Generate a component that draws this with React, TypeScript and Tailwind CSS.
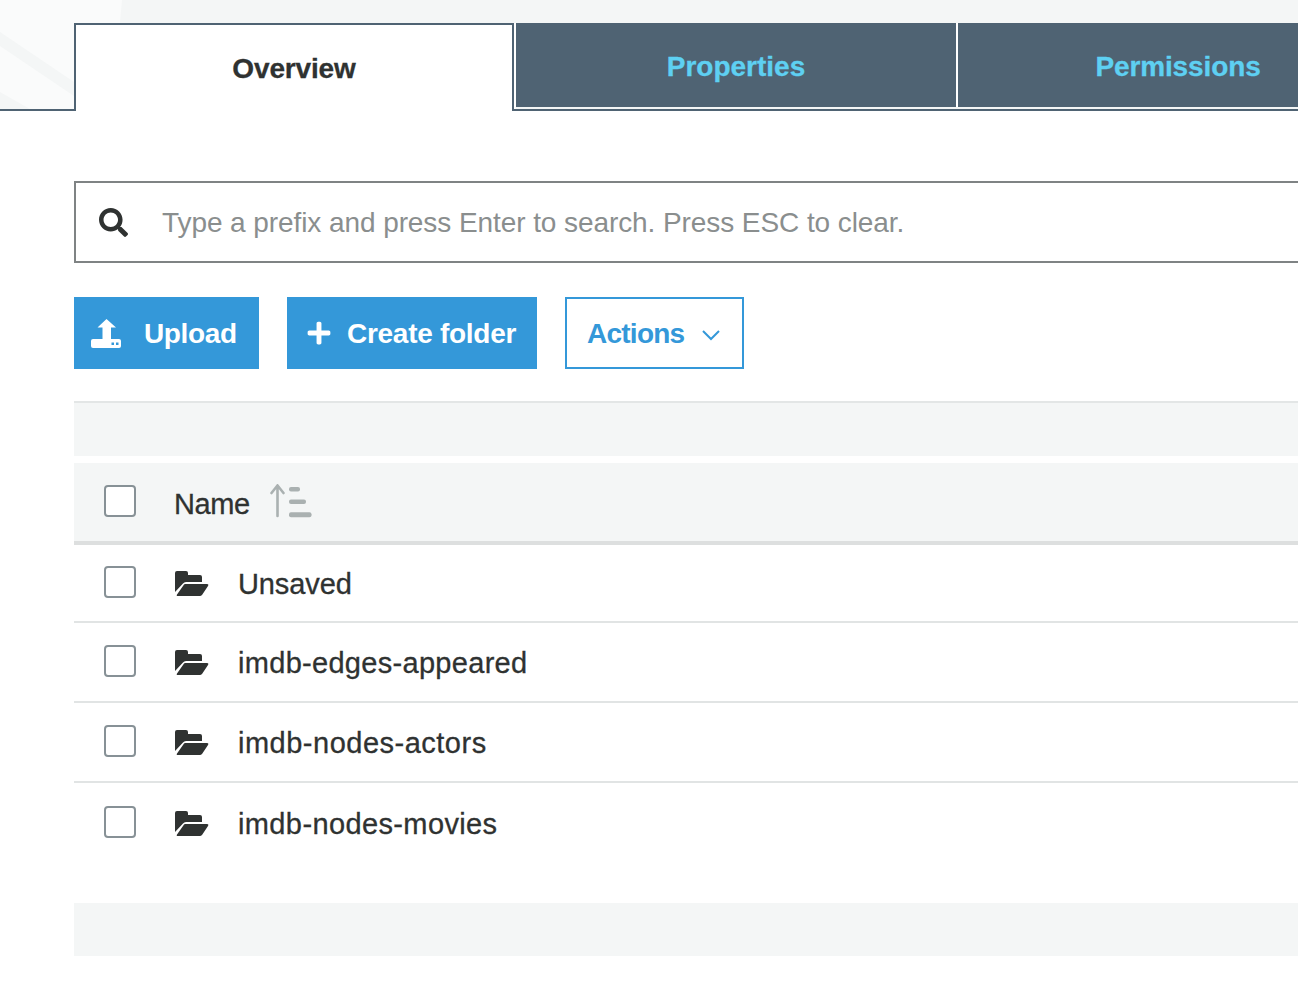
import { FaSearch, FaPlus } from "react-icons/fa";

const font = "font-['Liberation_Sans',Arial,sans-serif]";

function Box() {
  return <span className="block w-8 h-8 shrink-0 rounded-[4px] border-2 border-[#879196] bg-white" />;
}

function Folder() {
  return (
    <svg className="ml-[39px] mt-[5px] shrink-0" width="34" height="25" viewBox="0 0 34 25" fill="#2f3231">
      <path d="M0 2Q0 0 2 0H11Q13 0 13 2V4H25Q27 4 27 6V11H11Q9 11 8 12.5L0 21Z" />
      <path d="M10 13H32Q34 13 33 15L27 24Q26 25 25 25H3Q1 25 2 23.5L8 15Q9 13 10 13Z" />
    </svg>
  );
}

function Row({ label, h, box, track, last }: { label: string; h: string; box: string; track: string; last?: boolean }) {
  return (
    <div className={`flex items-start pl-[30px] ${h} ${box} ${last ? "" : "border-b-2 border-[#e1e4e4]"}`}>
      <Box />
      <Folder />
      <span className={`ml-[29px] text-[29px] leading-[36px] [-webkit-text-stroke:0.3px] text-[#2f3231] ${track}`}>{label}</span>
    </div>
  );
}

export default function App() {
  return (
    <div className={`${font} w-[1298px] h-[988px] overflow-hidden bg-white`}>
      <div className="relative h-[111px] bg-[#f4f6f6] border-b-2 border-[#4f6373]">
        <svg className="absolute left-0 top-0" width="130" height="109" viewBox="0 0 130 109">
          <path d="M0 0H122L112 109H0Z" fill="#fafbfb" />
          <path d="M0 32L74 82V96L0 46Z" fill="#f4f6f6" />
          <path d="M0 92L30 109H0Z" fill="#f4f6f6" />
        </svg>
        <div className="absolute left-[74px] top-[23px] flex h-[88px] w-[1400px]">
          <div className="w-[440px] h-[88px] bg-white border-2 border-b-0 border-[#4f6373] flex items-center justify-center font-bold text-[28px] tracking-[-0.15px] [-webkit-text-stroke:0.3px] text-[#2f3231] pt-[2px]">
            Overview
          </div>
          <div className="h-[86px] w-[2px] bg-white" />
          <div className="w-[440px] h-[84px] bg-[#4f6373] flex items-center justify-center font-bold text-[28px] tracking-[0px] [-webkit-text-stroke:0.3px] text-[#5ed0f2] pt-[4px]">
            Properties
          </div>
          <div className="h-[84px] w-[2px] bg-white" />
          <div className="w-[440px] h-[84px] bg-[#4f6373] flex items-center justify-center font-bold text-[28px] tracking-[-0.12px] [-webkit-text-stroke:0.3px] text-[#5ed0f2] pt-[4px]">
            Permissions
          </div>
        </div>
      </div>

      <div className="pl-[74px] w-[1400px]">
        <div className="mt-[70px] h-[82px] border-2 border-[#7f8384] flex items-center bg-white">
          <FaSearch className="ml-[23px] w-[29px] h-[29px] text-[#2f3231]" />
          <span className="ml-[34px] mt-[2px] text-[28px] tracking-[-0.08px] text-[#8a8e8e]">
            Type a prefix and press Enter to search. Press ESC to clear.
          </span>
        </div>

        <div className="mt-[34px] flex gap-[28px] h-[72px]">
          <div className="w-[185px] bg-[#3498d9] flex items-center text-white text-[28px] tracking-[-0.35px] font-bold pl-[17px]">
            <svg width="30" height="30" viewBox="0 0 30 30" fill="#fff">
              <path d="M15.5 1L25 9.5H20V21H11.5V9.5H6.5Z" />
              <rect x="0" y="21" width="30" height="9" rx="2" />
              <rect x="20.5" y="24.5" width="2.5" height="2.5" fill="#3498d9" />
              <rect x="25" y="24.5" width="2.5" height="2.5" fill="#3498d9" />
            </svg>
            <span className="ml-[23px] mt-[2px]">Upload</span>
          </div>
          <div className="w-[250px] bg-[#3498d9] flex items-center text-white text-[28px] tracking-[-0.28px] font-bold pl-[19px]">
            <FaPlus className="w-[26px] h-[26px]" />
            <span className="ml-[15px] mt-[2px]">Create folder</span>
          </div>
          <div className="w-[179px] border-2 border-[#3498d9] flex items-center text-[#3498d9] text-[28px] tracking-[-0.75px] font-bold pl-[20px]">
            <span className="mt-[2px]">Actions</span>
            <svg className="ml-[18px] mt-[3px]" width="18" height="12" viewBox="0 0 18 12" fill="none" stroke="#3498d9" strokeWidth="2">
              <path d="M1 2L9 10L17 2" />
            </svg>
          </div>
        </div>

        <div className="mt-[32px] h-[55px] bg-[#f4f6f6] border-t-2 border-[#e3e6e6]" />

        <div className="mt-[7px] h-[82px] bg-[#f4f6f6] border-b-4 border-[#dddfdf] flex items-start pl-[30px] pt-[22px]">
          <Box />
          <span className="ml-[38px] text-[29px] leading-[36px] mt-[1px] [-webkit-text-stroke:0.3px] tracking-[-0.45px] text-[#2f3231]">Name</span>
          <svg className="ml-[20px] -mt-[1px]" width="42" height="34" viewBox="0 0 42 34" fill="#aab1b1">
            <path d="M7.5 2V32M1.5 9L7.5 1.5L13.5 9" fill="none" stroke="#aab1b1" strokeWidth="2.6" strokeLinecap="round" />
            <rect x="19" y="3" width="11" height="4.6" rx="2" />
            <rect x="19" y="15.5" width="17" height="4.6" rx="2" />
            <rect x="19" y="28.3" width="22.5" height="5" rx="2" />
          </svg>
        </div>

        <Row label="Unsaved" h="h-[78px]" box="pt-[21px]" track="tracking-[-0.1px]" />
        <Row label="imdb-edges-appeared" h="h-[80px]" box="pt-[22px]" track="tracking-[0.3px]" />
        <Row label="imdb-nodes-actors" h="h-[80px]" box="pt-[22px]" track="tracking-[0.5px]" />
        <Row label="imdb-nodes-movies" h="h-[120px]" box="pt-[23px]" track="tracking-[0.38px]" last />

        <div className="h-[53px] bg-[#f4f6f6]" />
      </div>
    </div>
  );
}
